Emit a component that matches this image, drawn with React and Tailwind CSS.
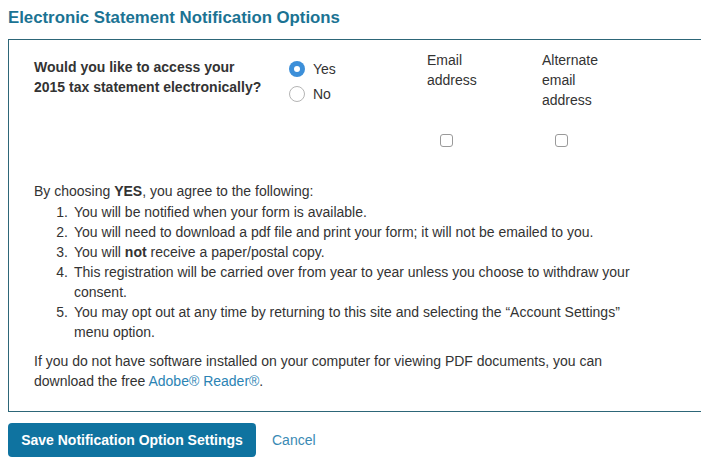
import React from 'react';

const items = [
  <>You will be notified when your form is available.</>,
  <>You will need to download a pdf file and print your form; it will not be emailed to you.</>,
  <>You will <strong>not</strong> receive a paper/postal copy.</>,
  <>This registration will be carried over from year to year unless you choose to withdraw your consent.</>,
  <>You may opt out at any time by returning to this site and selecting the “Account Settings” menu option.</>,
];

function Radio({ checked, label }) {
  return (
    <label className="flex items-center h-5 gap-2">
      {checked ? (
        <span className="w-4 h-4 rounded-full bg-[#3c8fd9] flex items-center justify-center">
          <span className="w-[6px] h-[6px] rounded-full bg-white" />
        </span>
      ) : (
        <span className="w-4 h-4 rounded-full border border-[#b5b5b5] bg-white" />
      )}
      <span>{label}</span>
    </label>
  );
}

function Checkbox() {
  return <span className="block w-[13px] h-[13px] rounded-[3px] border border-[#9a9a9a] bg-white" />;
}

export default function App() {
  return (
    <div className="w-[701px] h-[463px] overflow-hidden bg-white text-[14px] leading-5 text-[#333] font-['Liberation_Sans',Arial,sans-serif]">
      <h1 className="pl-2 pt-[8px] text-[16.8px] leading-5 font-bold text-[#1b7393]">
        Electronic Statement Notification Options
      </h1>

      <div className="mt-[11px] ml-2 border border-r-0 border-[#2d6678] pl-[25px] pr-4 pb-[20px]">
        {/* question + options */}
        <div className="flex items-start pt-[10px]">
          <p className="w-[255px] mt-[7px] font-bold">
            Would you like to access your<br />2015 tax statement electronically?
          </p>
          <div className="w-[138px] mt-[9px] flex flex-col gap-[5px]">
            <Radio checked label="Yes" />
            <Radio label="No" />
          </div>
          <div className="w-[115px]">
            <div className="h-[60px]">Email<br />address</div>
            <div className="mt-[24px] ml-[13px]"><Checkbox /></div>
          </div>
          <div className="w-[100px]">
            <div className="h-[60px]">Alternate<br />email<br />address</div>
            <div className="mt-[24px] ml-[13px]"><Checkbox /></div>
          </div>
        </div>

        <p className="mt-[34px]">
          By choosing <strong>YES</strong>, you agree to the following:
        </p>
        <ol className="mt-px pr-[50px]">
          {items.map((t, i) => (
            <li key={i} className="flex">
              <span className="w-[40px] shrink-0 text-right pr-[6px]">{i + 1}.</span>
              <span>{t}</span>
            </li>
          ))}
        </ol>

        <p className="mt-[9px] pr-[70px]">
          If you do not have software installed on your computer for viewing PDF documents, you can download the free{' '}
          <a className="text-[#2b83b4]">Adobe® Reader®</a>.
        </p>
      </div>

      <div className="flex items-center ml-2 mt-[11px]">
        <button className="w-[248px] h-[34px] rounded bg-[#0f73a0] text-white font-bold">
          Save Notification Option Settings
        </button>
        <a className="ml-4 text-[#3a8ab4]">Cancel</a>
      </div>
    </div>
  );
}
